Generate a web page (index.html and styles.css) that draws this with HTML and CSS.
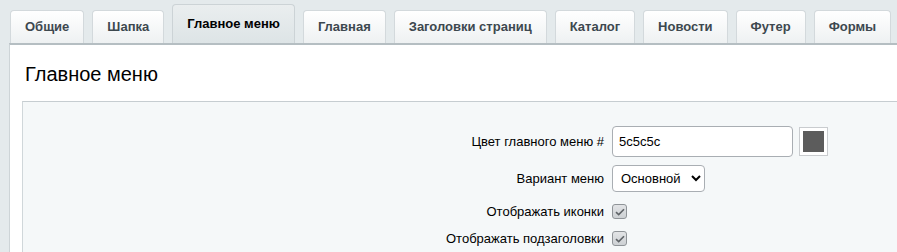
FILE: index.html
```html
<!DOCTYPE html>
<html lang="ru">
<head>
  <meta charset="UTF-8">
  <title>Главное меню</title>
  <link rel="stylesheet" href="styles.css">
</head>
<body>
  <div class="tabs">
    <div class="tab">Общие</div>
    <div class="tab">Шапка</div>
    <div class="tab active">Главное меню</div>
    <div class="tab">Главная</div>
    <div class="tab">Заголовки страниц</div>
    <div class="tab">Каталог</div>
    <div class="tab">Новости</div>
    <div class="tab">Футер</div>
    <div class="tab">Формы</div>
  </div>

  <div class="panel">
    <h2 class="panel-title">Главное меню</h2>
    <div class="settings">
      <div class="row row-color">
        <label class="row-label">Цвет главного меню #</label>
        <input class="text-input" type="text" value="5c5c5c">
        <span class="swatch"><span class="swatch-fill"></span></span>
      </div>
      <div class="row row-select">
        <label class="row-label">Вариант меню</label>
        <select class="select-input">
          <option>Основной</option>
        </select>
      </div>
      <div class="row row-check">
        <label class="row-label">Отображать иконки</label>
        <span class="check">
          <svg width="10" height="8" viewBox="0 0 10 8"><path d="M1 4.2 L3.7 6.6 L9 1.2" fill="none" stroke="#5f6468" stroke-width="1.6"/></svg>
        </span>
      </div>
      <div class="row row-check">
        <label class="row-label">Отображать подзаголовки</label>
        <span class="check">
          <svg width="10" height="8" viewBox="0 0 10 8"><path d="M1 4.2 L3.7 6.6 L9 1.2" fill="none" stroke="#5f6468" stroke-width="1.6"/></svg>
        </span>
      </div>
    </div>
  </div>
</body>
</html>
```

FILE: styles.css
```css
body {
  margin: 0;
  background-color: #e4eaec;
  font-family: "Liberation Sans", Arial, sans-serif;
  color: #000;
  overflow: hidden;
  height: 252px;
}

/* вкладки */
.tabs {
  display: flex;
  align-items: flex-end;
  gap: 8px;
  padding: 4px 0 0 10px;
  height: 39px;
}
.tab {
  box-sizing: border-box;
  height: 33px;
  line-height: 31px;
  padding: 0 14px;
  font-size: 13px;
  font-weight: bold;
  color: #3d484f;
  white-space: nowrap;
  background: linear-gradient(#ffffff, #eef1f2);
  border: 1px solid #d3d9dc;
  border-bottom: none;
  border-radius: 4px 4px 0 0;
}
.tab.active {
  height: 39px;
  line-height: 37px;
  color: #000;
  background: linear-gradient(#eaeeef, #dde4e6);
  border-color: #ccd3d6;
}

/* панель */
.panel {
  margin-left: 9px;
  background: #fff;
  border-top: 2px solid #b5bec2;
  border-left: 1px solid #cdd4d7;
  padding: 0 0 0 12px;
  height: 207px;
  overflow: hidden;
}
.panel-title {
  margin: 0;
  padding: 18px 0 0 3px;
  height: 38px;
  font-size: 20px;
  font-weight: normal;
}
.settings {
  background: #f5f8f9;
  border-top: 1px solid #c6cdd1;
  border-left: 1px solid #d0d7da;
  padding-top: 24px;
  height: 160px;
}

/* строки настроек */
.row {
  display: flex;
  align-items: center;
  font-size: 13px;
}
.row-label {
  width: 581px;
  padding-right: 8px;
  text-align: right;
}
.row-color {
  height: 31px;
  margin-bottom: 8px;
}
.row-select {
  height: 27px;
  margin-bottom: 6px;
}
.row-check {
  height: 27px;
}
.text-input {
  box-sizing: border-box;
  width: 181px;
  height: 31px;
  padding: 0 6px;
  font-family: inherit;
  font-size: 13px;
  border: 1px solid #a9aeb3;
  border-radius: 4px;
  background: #fff;
}
.swatch {
  box-sizing: border-box;
  margin-left: 6px;
  width: 29px;
  height: 29px;
  padding: 3px;
  border: 1px solid #c9cccf;
  background: #fff;
}
.swatch-fill {
  display: block;
  width: 100%;
  height: 100%;
  background: #5c5c5c;
}
.select-input {
  box-sizing: border-box;
  width: 93px;
  height: 27px;
  padding: 0 4px;
  font-family: inherit;
  font-size: 13px;
  border: 1px solid #a9aeb3;
  border-radius: 4px;
  background: #fff;
  color: #000;
}
.check {
  box-sizing: border-box;
  width: 15px;
  height: 15px;
  display: flex;
  align-items: center;
  justify-content: center;
  background: linear-gradient(#e2e4e6, #cdd1d4);
  border: 1px solid #8f9498;
  border-radius: 3px;
}
```
